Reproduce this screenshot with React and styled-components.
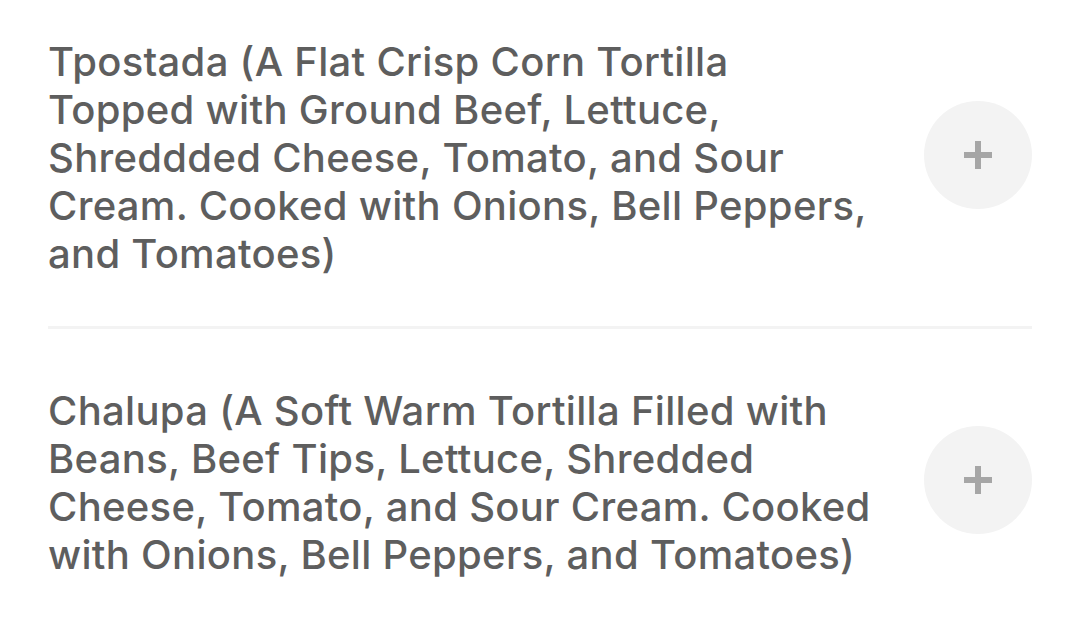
import styled, { createGlobalStyle } from "styled-components";

const GlobalStyle = createGlobalStyle`
  html, body {
    margin: 0;
    padding: 0;
    background: #ffffff;
  }
  body {
    font-family: Inter, "Liberation Sans", sans-serif;
  }
`;

const MenuList = styled.ul`
  list-style: none;
  margin: 0;
  padding: 0 48px;
`;

const MenuItem = styled.li`
  display: flex;
  align-items: center;
  gap: 40px;
  padding: ${(p) => p.$pad};
  border-bottom: ${(p) => (p.$divider ? "3px solid #f3f3f3" : "none")};
`;

const ItemTitle = styled.div`
  flex: 1;
  font-size: 40px;
  line-height: 48px;
  letter-spacing: 0.3px;
  font-weight: 500;
  color: #5e5e5e;
`;

const AddButton = styled.button`
  flex-shrink: 0;
  width: 108px;
  height: 108px;
  margin-bottom: 6px;
  border: none;
  border-radius: 50%;
  background: #f3f3f3;
  display: flex;
  align-items: center;
  justify-content: center;
  padding: 0;
  cursor: pointer;
`;

function PlusIcon() {
  return (
    <svg width="28" height="28" viewBox="0 0 28 28">
      <rect x="0" y="11" width="28" height="6" fill="#a6a6a6" />
      <rect x="11" y="0" width="6" height="28" fill="#a6a6a6" />
    </svg>
  );
}

const items = [
  {
    title:
      "Tpostada (A Flat Crisp Corn Tortilla Topped with Ground Beef, Lettuce, Shreddded Cheese, Tomato, and Sour Cream. Cooked with Onions, Bell Peppers, and Tomatoes)",
    pad: "38px 0 48px",
    divider: true,
  },
  {
    title:
      "Chalupa (A Soft Warm Tortilla Filled with Beans, Beef Tips, Lettuce, Shredded Cheese, Tomato, and Sour Cream. Cooked with Onions, Bell Peppers, and Tomatoes)",
    pad: "58px 0 40px",
    divider: false,
  },
];

export default function App() {
  return (
    <>
      <GlobalStyle />
      <MenuList>
        {items.map((item) => (
          <MenuItem key={item.title} $pad={item.pad} $divider={item.divider}>
            <ItemTitle>{item.title}</ItemTitle>
            <AddButton aria-label="Add item">
              <PlusIcon />
            </AddButton>
          </MenuItem>
        ))}
      </MenuList>
    </>
  );
}
